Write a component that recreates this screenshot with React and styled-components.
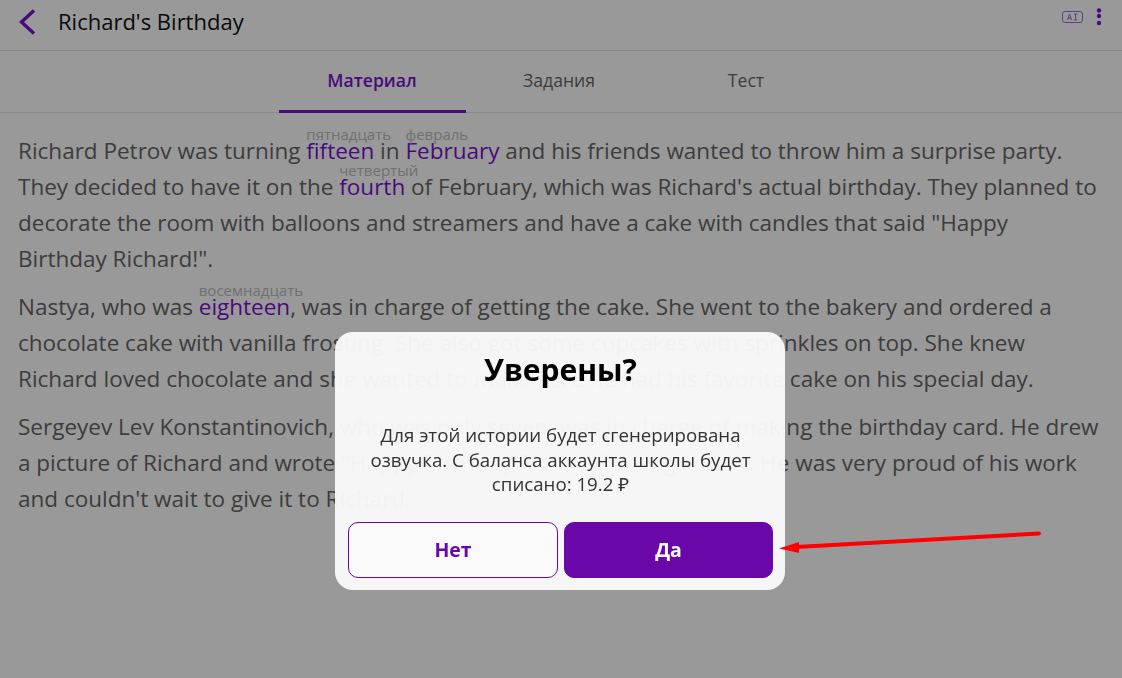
import React from 'react'
import styled, { createGlobalStyle } from 'styled-components'

const Global = createGlobalStyle`
  html, body {
    margin: 0;
    padding: 0;
    height: 100%;
    overflow: hidden;
    background: #fff;
    font-family: 'Open Sans', 'Noto Sans', sans-serif;
  }
`

const Page = styled.div`
  height: 678px;
  display: flex;
  flex-direction: column;
  color: #666;
`

const Header = styled.header`
  height: 50px;
  flex: none;
  box-sizing: content-box;
  display: flex;
  align-items: flex-start;
  padding-left: 18px;
  padding-right: 20px;
  border-bottom: 1px solid #e4d9ec;
`

const BackButton = styled.span`
  display: flex;
  width: 40px;
  flex: none;
  padding-top: 9px;
`

const Title = styled.h1`
  margin: 0;
  flex: 1;
  padding-top: 6px;
  font-size: 22px;
  line-height: 30px;
  font-weight: 400;
  color: #111;
`

const HeaderIcons = styled.div`
  display: flex;
  align-items: flex-start;
  gap: 13px;
  padding-top: 7px;
`

const Tabs = styled.nav`
  height: 61px;
  flex: none;
  display: flex;
  justify-content: center;
  padding-right: 4px;
  border-bottom: 1px solid #e6e6e6;
`

const Tab = styled.div`
  width: 187px;
  box-sizing: border-box;
  display: flex;
  align-items: center;
  justify-content: center;
  padding-bottom: 1px;
  font-size: 17.6px;
  font-weight: ${p => (p.$active ? 600 : 400)};
  color: ${p => (p.$active ? '#7a12cf' : '#666')};
  border-bottom: 3px solid ${p => (p.$active ? '#7a12cf' : 'transparent')};
  margin-bottom: -1px;
`

const Story = styled.main`
  padding: 20px 22px 0 18px;
`

const Paragraph = styled.p`
  margin: 0 0 12px;
  font-size: 22.5px;
  line-height: 36px;
  color: #666;
`

const Word = styled.span`
  position: relative;
  color: #7a12cf;
`

const Hint = styled.span`
  position: absolute;
  left: 0;
  top: -11px;
  font-size: 15px;
  line-height: 20px;
  color: #bbb;
  white-space: nowrap;
`

const Overlay = styled.div`
  position: fixed;
  inset: 0;
  background: rgba(0, 0, 0, 0.4);
`

const Modal = styled.div`
  position: absolute;
  left: 335px;
  top: 332px;
  width: 450px;
  height: 258px;
  box-sizing: border-box;
  padding: 18px 12px 12px 13px;
  border-radius: 18px;
  background: rgba(249, 249, 249, 0.965);
  display: flex;
  flex-direction: column;
  align-items: center;
`

const ModalTitle = styled.h2`
  margin: 0;
  font-size: 30px;
  line-height: 40px;
  font-weight: 700;
  color: #000;
`

const ModalText = styled.p`
  margin: 33px 0 0;
  width: 400px;
  text-align: center;
  font-size: 18.7px;
  line-height: 24.5px;
  color: #333;
`

const Buttons = styled.div`
  margin-top: auto;
  width: 100%;
  display: grid;
  grid-template-columns: 210px 209px;
  justify-content: space-between;
  column-gap: 6px;
`

const Button = styled.button`
  height: 56px;
  box-sizing: border-box;
  padding: 0 0 2px;
  border-radius: 10px;
  border: 1px solid #6a07a8;
  background: ${p => (p.$primary ? '#6a07a8' : 'rgba(255, 255, 255, 0.4)')};
  color: ${p => (p.$primary ? '#fff' : '#6a07a8')};
  font-family: inherit;
  font-size: 19.5px;
  font-weight: 700;
`

const Arrow = styled.svg`
  position: absolute;
  left: 770px;
  top: 520px;
`

function Glossed({ hint, children }) {
  return (
    <Word>
      <Hint>{hint}</Hint>
      {children}
    </Word>
  )
}

export default function App() {
  return (
    <>
      <Global />
      <Page>
        <Header>
          <BackButton>
            <svg width="20" height="28" viewBox="0 0 20 28" fill="none">
              <path d="M16 1.5 L3.5 13 L16 24.5" stroke="#7a12cf" strokeWidth="3.4" />
            </svg>
          </BackButton>
          <Title>Richard's Birthday</Title>
          <HeaderIcons>
            <svg width="21" height="12" viewBox="0 0 21 12" fill="none" style={{ marginTop: 4 }}>
              <rect x="0.5" y="0.5" width="20" height="11" rx="2.5" stroke="#a668d8" />
              <path d="M5.5 9 L7.5 3 L9.5 9 M6 7 H9 M12 3 H15 M13.5 3 V9 M12 9 H15" stroke="#a668d8" strokeWidth="1" />
            </svg>
            <svg width="6" height="20" viewBox="0 0 6 20">
              <circle cx="3" cy="3.5" r="2.2" fill="#7a12cf" />
              <circle cx="3" cy="9" r="2.2" fill="#7a12cf" />
              <circle cx="3" cy="16" r="2.2" fill="#7a12cf" />
            </svg>
          </HeaderIcons>
        </Header>
        <Tabs>
          <Tab $active>Материал</Tab>
          <Tab>Задания</Tab>
          <Tab>Тест</Tab>
        </Tabs>
        <Story>
          <Paragraph>
            Richard Petrov was turning <Glossed hint="пятнадцать">fifteen</Glossed> in{' '}
            <Glossed hint="февраль">February</Glossed> and his friends wanted to throw him a surprise party.
            They decided to have it on the <Glossed hint="четвертый">fourth</Glossed> of February, which was
            Richard's actual birthday. They planned to decorate the room with balloons and streamers and have
            a cake with candles that said "Happy Birthday Richard!".
          </Paragraph>
          <Paragraph>
            Nastya, who was <Glossed hint="восемнадцать">eighteen</Glossed>, was in charge of getting the cake.
            She went to the bakery and ordered a chocolate cake with vanilla frosting. She also got some
            cupcakes with sprinkles on top. She knew Richard loved chocolate and she wanted to make sure he had
            his favorite cake on his special day.
          </Paragraph>
          <Paragraph>
            Sergeyev Lev Konstantinovich, who was only seven, was in charge of making the birthday card. He
            drew a picture of Richard and wrote "Happy Birthday Richard!" in big letters. He was very proud of
            his work and couldn't wait to give it to Richard.
          </Paragraph>
        </Story>
      </Page>
      <Overlay>
        <Modal>
          <ModalTitle>Уверены?</ModalTitle>
          <ModalText>
            Для этой истории будет сгенерирована озвучка. С баланса аккаунта школы будет списано: 19.2 ₽
          </ModalText>
          <Buttons>
            <Button>Нет</Button>
            <Button $primary>Да</Button>
          </Buttons>
        </Modal>
        <Arrow width="290" height="45" viewBox="0 0 290 45" fill="none">
          <path d="M269 13.5 L26 27" stroke="#ff0000" strokeWidth="4" strokeLinecap="round" />
          <path d="M9 28.5 L29 22 L29 33 Z" fill="#ff0000" />
        </Arrow>
      </Overlay>
    </>
  )
}
